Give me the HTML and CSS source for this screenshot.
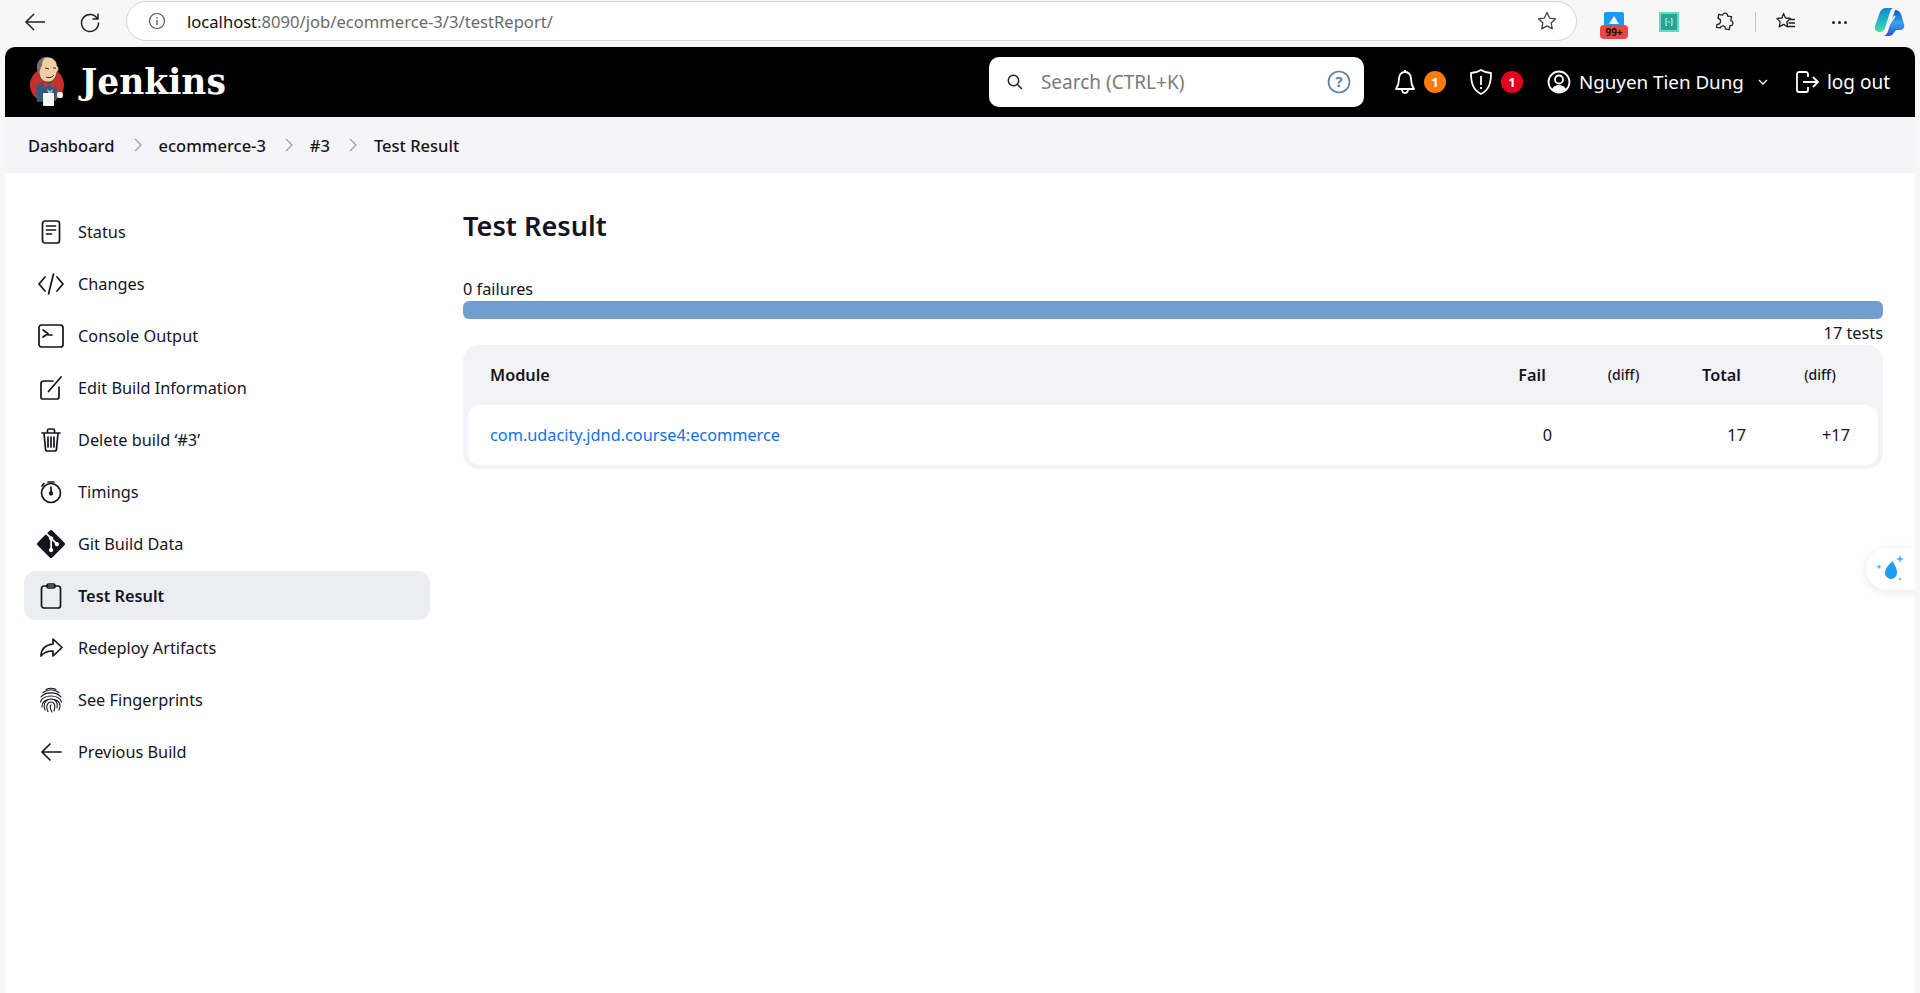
FILE: index.html
```html
<!DOCTYPE html>
<html lang="en">
<head>
<meta charset="utf-8">
<title>Test Result</title>
<link rel="stylesheet" href="styles.css">
</head>
<body>
<div class="toolbar">
  <svg class="tb-back" width="24" height="24" viewBox="0 0 24 24"><path d="M22 12H3M11 4l-8 8 8 8" fill="none" stroke="#222" stroke-width="1.5"/></svg>
  <svg class="tb-reload" width="24" height="24" viewBox="0 0 24 24"><path d="M19.5 9A8.5 8.5 0 1 0 20.5 12.5M20 3.500V9h-5.500" fill="none" stroke="#222" stroke-width="1.5"/></svg>
  <div class="urlbar">
    <svg class="url-info" width="20" height="20" viewBox="0 0 20 20"><circle cx="10" cy="10" r="7.500" fill="none" stroke="#555" stroke-width="1.200"/><path d="M10 9v5M10 6v1.500" stroke="#555" stroke-width="1.300"/></svg>
    <span class="url-text"><span class="url-host">localhost</span>:8090/job/ecommerce-3/3/testReport/</span>
    <svg class="url-star" width="22" height="22" viewBox="0 0 22 22"><path d="M11 2.500l2.600 5.600 6 .7-4.500 4.100 1.200 6L11 15.900l-5.300 3 1.200-6-4.500-4.100 6-.7z" fill="none" stroke="#444" stroke-width="1.300" stroke-linejoin="round"/></svg>
  </div>
  <div class="ext ext-app">
    <svg width="20" height="20" viewBox="0 0 20 20"><rect width="20" height="18" rx="2" fill="#1a9bf0"/><path d="M10 4l5 8H5z" fill="#fff"/></svg>
    <span class="ext-badge">99+</span>
  </div>
  <svg class="ext ext-green" width="20" height="20" viewBox="0 0 20 20"><rect width="20" height="20" fill="#62dcc6"/><rect x="2" y="2" width="16" height="16" fill="#2aa592"/><path d="M8 6.500H7v7h1M12 6.500h1v7h-1M9 10h2" fill="none" stroke="#d8f5ef" stroke-width="1"/></svg>
  <svg class="ext ext-puzzle" width="20" height="20" viewBox="0 0 20 20"><path d="M7.500 3.500a2.500 2.500 0 0 1 5 0h4v4a2.500 2.500 0 0 1 0 5v4h-4a2.500 2.500 0 0 0-5 0h-4v-3a2.500 2.500 0 0 0 0-6v-4z" transform="rotate(10 10 10)" fill="none" stroke="#222" stroke-width="1.300" stroke-linejoin="round"/></svg>
  <span class="tb-sep"></span>
  <svg class="ext ext-fav" width="22" height="22" viewBox="0 0 22 22"><path d="M8.500 2.500l2 4.500 5 .5-3.700 3.400 1 5-4.300-2.500-4.300 2.500 1-5L2 7.500l5-.5zM14 8.500h6M13.500 12h6.500M13 15.500h7" fill="none" stroke="#222" stroke-width="1.300" stroke-linejoin="round"/></svg>
  <span class="ext-dots"><i></i><i></i><i></i></span>
  <svg class="ext ext-copilot" width="30" height="28" viewBox="0 0 30 28">
    <defs>
      <linearGradient id="cpa" x1="0" y1="0" x2="0" y2="1"><stop offset="0" stop-color="#1583d8"/><stop offset=".55" stop-color="#22b8c8"/><stop offset="1" stop-color="#4fd89a"/></linearGradient>
      <linearGradient id="cpb" x1="0" y1="0" x2="0" y2="1"><stop offset="0" stop-color="#0f5fb8"/><stop offset=".5" stop-color="#3aa0f0"/><stop offset="1" stop-color="#2a50d0"/></linearGradient>
    </defs>
    <path d="M20 2c3 0 5 2 6 4l3 10c1 3-1 6-4 6h-4l-3 4c-1 1-2 2-4 2H9c2-1 3-2 4-5z" fill="url(#cpb)"/>
    <path d="M11 0h8c-2 0-3 1-4 4L10 20c-1 3-3 4-5 4H4c-3 0-5-3-4-6L5 4c1-2 3-4 6-4z" fill="url(#cpa)"/>
    <path d="M20 8l-8 11" stroke="#f7f7f7" stroke-width="1.600"/>
  </svg>
</div>

<div class="page">
  <header class="head">
    <a class="brand" href="#">
      <svg class="brand-logo" width="36" height="50" viewBox="0 0 36 50">
        <circle cx="18" cy="28" r="17" fill="#c9302c"/>
        <path d="M7 30c2-3 5-5 9-5h6c4 1 6 4 6 8l-1 11-19 1z" fill="#2f5c7d"/>
        <path d="M9 8c0-5 4-8 9-8 6 0 10 4 10 9 2 1 2 4 0 6-1 6-4 10-9 10-5 0-8-3-9-9-1-2-1-5-1-8z" fill="#f0cfa8" stroke="#3a2a20" stroke-width=".6"/>
        <path d="M10 17C7 12 7 6 11 3c2-2 4-2 6-3-3 2-4 5-4 9l-1 1z" fill="#77706a"/>
        <path d="M17 20c2 1 6 1 8-2M16 11l4 1M24 11l3 0" fill="none" stroke="#3a2a20" stroke-width="1"/>
        <path d="M15 25l5 2 6-3v7l-6-3-5 3z" fill="#d8322e"/>
        <path d="M18 32l3 2 3-2-1 4h-4z" fill="#9fb6c4"/>
        <rect x="14" y="36" width="11" height="13" rx="1" fill="#f6f6f6"/>
        <rect x="28" y="35" width="6" height="6" rx="2" fill="#eee"/>
      </svg>
      <span class="brand-name">Jenkins</span>
    </a>
    <div class="search">
      <svg width="18" height="18" viewBox="0 0 18 18"><circle cx="7.500" cy="7.500" r="5.200" fill="none" stroke="#222" stroke-width="1.500"/><path d="M11.500 11.500L16 16" stroke="#222" stroke-width="1.500"/></svg>
      <span class="search-text">Search (CTRL+K)</span>
      <svg class="search-help" width="24" height="24" viewBox="0 0 24 24"><circle cx="12" cy="12" r="10.500" fill="none" stroke="#5e7fab" stroke-width="1.700"/><text x="12" y="17" class="help-mark">?</text></svg>
    </div>
    <div class="head-actions">
      <span class="act">
        <svg width="24" height="26" viewBox="0 0 24 26"><path d="M12 3c-4 0-6 3-6 7 0 5-1 7-3 10h18c-2-3-3-5-3-10 0-4-2-7-6-7zM9 20c0 3 1.500 4 3 4s3-1 3-4M12 1v2" fill="none" stroke="#fff" stroke-width="1.800" stroke-linejoin="round"/></svg>
        <span class="badge badge-orange">1</span>
      </span>
      <span class="act">
        <svg width="26" height="28" viewBox="0 0 26 28"><path d="M13 2c3 2 6 3 10 3 0 10-2 17-10 21C5 22 3 15 3 5c4 0 7-1 10-3z" fill="none" stroke="#fff" stroke-width="1.800" stroke-linejoin="round"/><path d="M13 8v9M13 19v2" stroke="#fff" stroke-width="1.800"/></svg>
        <span class="badge badge-red">1</span>
      </span>
      <span class="user">
        <svg width="24" height="24" viewBox="0 0 24 24"><circle cx="12" cy="12" r="10.500" fill="none" stroke="#fff" stroke-width="1.800"/><circle cx="12" cy="9.500" r="4" fill="none" stroke="#fff" stroke-width="1.800"/><path d="M5 19c2-3 4-4 7-4s5 1 7 4c-2 2-4 3-7 3s-5-1-7-3z" fill="#fff"/></svg>
        <span class="user-name">Nguyen Tien Dung</span>
        <svg class="user-caret" width="12" height="12" viewBox="0 0 12 12"><path d="M2 4l4 4 4-4" fill="none" stroke="#fff" stroke-width="1.400"/></svg>
      </span>
      <span class="logout">
        <svg width="26" height="26" viewBox="0 0 26 26"><path d="M14 8V5c0-1-1-2-2-2H5C4 3 3 4 3 5v16c0 1 1 2 2 2h7c1 0 2-1 2-2v-3M9 13h15M19 8l5 5-5 5" fill="none" stroke="#fff" stroke-width="1.800"/></svg>
        <span>log out</span>
      </span>
    </div>
  </header>

  <nav class="crumbs">
    <a href="#">Dashboard</a><svg class="sep" width="10" height="14" viewBox="0 0 10 14"><path d="M2 1l6 6-6 6" fill="none" stroke="#8ea3c3" stroke-width="1.300"/></svg>
    <a href="#">ecommerce-3</a><svg class="sep" width="10" height="14" viewBox="0 0 10 14"><path d="M2 1l6 6-6 6" fill="none" stroke="#8ea3c3" stroke-width="1.300"/></svg>
    <a href="#">#3</a><svg class="sep" width="10" height="14" viewBox="0 0 10 14"><path d="M2 1l6 6-6 6" fill="none" stroke="#8ea3c3" stroke-width="1.300"/></svg>
    <a href="#">Test Result</a>
  </nav>

  <div class="layout">
    <aside class="side">
      <a class="item" href="#"><svg width="24" height="24" viewBox="0 0 24 24"><rect x="3.500" y="1" width="17" height="22" rx="2.500" class="ic"/><path d="M7.500 6h9M7.500 10h9M7.500 14h5" class="ic"/></svg>Status</a>
      <a class="item" href="#"><svg width="26" height="24" viewBox="0 0 26 24"><path d="M7 5l-6 7 6 7M19 5l6 7-6 7M15.500 2l-5 20" class="ic"/></svg>Changes</a>
      <a class="item" href="#"><svg width="26" height="24" viewBox="0 0 26 24"><rect x="1" y="1" width="24" height="22" rx="2.500" class="ic"/><path d="M5 6l5 3.500-5 3.500M10 11h4" class="ic"/></svg>Console Output</a>
      <a class="item" href="#"><svg width="24" height="24" viewBox="0 0 24 24"><path d="M14 5H4.500C3 5 2 6 2 7.500v14C2 22.500 3 23 4 23h14c1.500 0 2-1 2-2.500V11M9.500 15.500L22 1" class="ic"/></svg>Edit Build Information</a>
      <a class="item" href="#"><svg width="24" height="24" viewBox="0 0 24 24"><path d="M3 5h18M5 5l1.500 16c0 1 1 2 2 2h7c1 0 2-1 2-2L19 5M8.500 5V2.500c0-.8.500-1.500 1.500-1.500h4c1 0 1.500.7 1.500 1.500V5M9 9v10M12 9v10M15 9v10" class="ic"/></svg>Delete build ‘#3’</a>
      <a class="item" href="#"><svg width="24" height="24" viewBox="0 0 24 24"><circle cx="12" cy="13" r="9.500" class="ic"/><path d="M12 7v6M9 2h6M5 3.500L3 6" class="ic"/><circle cx="12" cy="13.500" r="1.300" class="ic"/></svg>Timings</a>
      <a class="item" href="#"><svg width="28" height="28" viewBox="0 0 24 24"><path d="M23.546 10.930L13.067.452c-.604-.603-1.582-.603-2.188 0L8.708 2.627l2.760 2.760c.645-.215 1.379-.070 1.889.441.516.515.658 1.258.438 1.900l2.658 2.660c.645-.223 1.387-.078 1.900.435.721.720.721 1.884 0 2.604-.719.719-1.881.719-2.600 0-.539-.541-.674-1.337-.404-1.996L12.860 8.955v6.525c.176.086.342.203.488.348.713.721.713 1.883 0 2.600-.719.721-1.889.721-2.609 0-.719-.719-.719-1.879 0-2.598.182-.180.387-.316.605-.406V8.835c-.217-.091-.424-.222-.600-.401-.545-.545-.676-1.342-.396-2.009L7.636 3.700.450 10.881c-.600.605-.600 1.584 0 2.189l10.480 10.477c.604.604 1.582.604 2.186 0l10.430-10.430c.605-.603.605-1.582 0-2.187" fill="#14141f"/></svg>Git Build Data</a>
      <a class="item item-on" href="#"><svg width="24" height="26" viewBox="0 0 24 26"><rect x="2.500" y="3" width="19" height="22" rx="2.500" class="ic"/><rect x="8" y="1" width="8" height="4" rx="1.500" class="ic"/></svg>Test Result</a>
      <a class="item" href="#"><svg width="24" height="24" viewBox="0 0 24 24"><path d="M14 3l9 8.500-9 8.500v-5c-5 0-9 1-12 5 0-7 4-11 12-12z" class="ic"/></svg>Redeploy Artifacts</a>
      <a class="item" href="#"><svg width="24" height="26" viewBox="0 0 24 26"><path d="M7 2.500c3-1.500 7-1.500 10 0M4 5.500c5-3.500 11-3.500 16 0M2 10c4-5.500 16-5.500 20 0M1.500 15c2-8 19-8 21 0M3 20c-1-10 18-11 18-1 0 2-1 3-1 4M6 23c-3-8 3-11 6-11 5 0 7 4 6 9M9 24.500C6 19 9 15 12 15c3 0 5 3 3 9M12 18c-2 2 0 5 1 7" class="ic ic-thin"/></svg>See Fingerprints</a>
      <a class="item" href="#"><svg width="24" height="24" viewBox="0 0 24 24"><path d="M22 12H3M11 4l-8 8 8 8" class="ic"/></svg>Previous Build</a>
    </aside>

    <main class="main">
      <h1 class="title">Test Result</h1>
      <div class="fail-label">0 failures</div>
      <div class="bar"></div>
      <div class="count">17 tests</div>
      <div class="table-wrap">
        <table class="results">
          <colgroup><col><col class="c-fail"><col class="c-diff"><col class="c-total"><col class="c-diff2"></colgroup>
          <thead>
            <tr><th class="th-left">Module</th><th>Fail</th><th class="th-small">(diff)</th><th>Total</th><th class="th-small">(diff)</th></tr>
          </thead>
          <tbody>
            <tr><td><a href="#">com.udacity.jdnd.course4:ecommerce</a></td><td class="num">0</td><td class="num"></td><td class="num">17</td><td class="num">+17</td></tr>
          </tbody>
        </table>
      </div>
    </main>
  </div>

  <div class="float-drop">
    <svg width="30" height="28" viewBox="0 0 30 28"><path d="M15 6c3 4 6 8 6 12a6 6 0 0 1-12 0c0-4 3-8 6-12z" fill="#1f9bf0" transform="rotate(8 15 18)"/><path d="M24 0l1 3 3 1-3 1-1 3-1-3-3-1 3-1zM3 9l.7 2 2 .7-2 .7-.7 2-.7-2-2-.7 2-.7zM24 22l.5 1.500 1.500.5-1.500.5-.5 1.500-.5-1.500-1.500-.5 1.500-.5z" fill="#3fb0f5"/></svg>
  </div>
</div>
</body>
</html>
```

FILE: styles.css
```css
* { box-sizing: border-box; }
html, body { margin: 0; height: 100%; }
body {
  background: #f7f7f7;
  font-family: "Noto Sans", sans-serif;
  font-size: 16.300px;
  color: #14141f;
  display: flex;
  flex-direction: column;
  overflow: hidden;
}
a { color: inherit; text-decoration: none; }

.toolbar { height: 47px; flex: none; display: flex; align-items: center; position: relative; }
.tb-back { margin-left: 23px; margin-top: -3px; }
.tb-reload { margin-left: 31px; margin-top: -3px; }
.urlbar {
  margin-left: 24px; width: 1451px; height: 40px; margin-top: -5px;
  background: #fff; border: 1px solid #d4d4d4; border-radius: 20px;
  display: flex; align-items: center; padding: 0 13px 0 20px;
}
.url-text { margin-left: 20px; font-size: 16.600px; color: #6a6a6a; flex: 1; }
.url-host { color: #111; }
.url-star { margin-right: 5px; }
.ext { flex: none; margin-top: -3px; }
.ext-app { position: relative; width: 20px; height: 20px; margin-left: 27px; }
.ext-app svg { display: block; }
.ext-badge {
  position: absolute; left: -4px; top: 13px; width: 28px; height: 14px; border-radius: 4px;
  background: #ef4444; color: #111; font-size: 10px; font-weight: 700; line-height: 14px; text-align: center;
}
.ext-green { margin-left: 35px; }
.ext-puzzle { margin-left: 35px; }
.tb-sep { width: 1px; height: 20px; background: #c8c8c8; margin-left: 21px; margin-top: -3px; }
.ext-fav { margin-left: 19px; }
.ext-dots { display: flex; gap: 3px; margin-left: 35px; margin-top: -3px; }
.ext-dots i { width: 3px; height: 3px; border-radius: 50%; background: #222; }
.ext-copilot { margin-left: 28px; }

.page {
  flex: 1; margin: 0 5px 0 5px; background: #fff; position: relative;
  border-radius: 10px 10px 0 0; overflow: hidden;
}

.head {
  height: 70px; background: #000; color: #fff; display: flex; align-items: center; padding-left: 24px;
}
.brand { display: flex; align-items: center; gap: 16px; }
.brand-logo { display: block; }
.brand-name {
  font-family: "DejaVu Serif", serif; font-weight: 700; font-size: 34.500px; line-height: 40px; color: #fff;
}
.search {
  margin-left: auto; width: 375px; height: 50px; background: #fff; border-radius: 10px;
  display: flex; align-items: center; padding: 0 13px 0 17px; color: #7a7a7a;
}
.search-text { flex: 1; margin-left: 17px; font-size: 19px; }
.help-mark { font-size: 15px; font-weight: 700; fill: #5e7fab; text-anchor: middle; }
.head-actions { display: flex; align-items: center; margin-right: 25px; margin-left: 29px; font-size: 19px; }
.act { display: flex; align-items: center; gap: 7px; margin-right: 22px; }
.act svg, .user svg, .logout svg { display: block; }
.badge {
  width: 22px; height: 22px; border-radius: 50%; color: #fff; font-size: 13px; font-weight: 700;
  display: flex; align-items: center; justify-content: center;
}
.badge-orange { background: #fb7c0c; }
.badge-red { background: #e6001f; }
.user { display: flex; align-items: center; gap: 8px; margin-left: 2px; }
.user-name { font-size: 18.800px; }
.user-caret { margin-left: 5px; }
.logout { display: flex; align-items: center; gap: 7px; margin-left: 25px; }

.crumbs {
  height: 56px; background: #f5f5f7; display: flex; align-items: center; padding-left: 23px;
  font-size: 16.500px; font-weight: 500;
}
.sep { margin: 0 16px 0 18px; }

.layout { display: flex; }
.side { width: 425px; padding: 34px 0 0 19px; display: flex; flex-direction: column; gap: 3px; flex: none; }
.item {
  height: 49px; width: 406px; border-radius: 12px; display: flex; align-items: center; position: relative;
  padding-left: 54px;
}
.item svg { position: absolute; left: 27px; top: 50%; transform: translate(-50%, -50%); }
.item-on { background: #ecedf3; font-weight: 600; }
.ic { fill: none; stroke: #14141f; stroke-width: 1.700; stroke-linecap: round; stroke-linejoin: round; }
.ic-thin { stroke-width: 1.100; }

.main { flex: 1; padding: 34px 32px 0 33px; }
.title { margin: 0; font-size: 27.200px; line-height: 38px; font-weight: 600; }
.fail-label { margin-top: 32px; line-height: 24px; }
.bar { height: 18px; background: #729ecf; border-radius: 6px; }
.count { margin-top: 2px; line-height: 24px; text-align: right; }

.table-wrap { background: #f2f2f7; border-radius: 16px; padding: 0 5px 4px; }
.results { width: 100%; border-collapse: separate; border-spacing: 0; table-layout: fixed; }
.c-fail { width: 84px; }
.c-diff { width: 101px; }
.c-total { width: 93px; }
.c-diff2 { width: 110px; }
.results th { height: 60px; padding: 0 22px; font-weight: 600; text-align: center; }
.results .th-left { text-align: left; }
.results .th-small { font-size: 14px; font-weight: 500; padding-bottom: 2px; padding-right: 24px; }
.results .th-small:last-child { padding-right: 28px; }
.results td { height: 60px; padding: 0 22px; background: #fff; }
.results td:first-child { border-radius: 12px 0 0 12px; }
.results td:last-child { border-radius: 0 12px 12px 0; padding-right: 28px; }
.results td a { color: #1071e5; }
.num { text-align: right; }

.float-drop {
  position: absolute; right: 0; top: 501px; width: 49px; height: 42px; background: #fff;
  border-radius: 21px 0 0 21px; box-shadow: 0 2px 10px rgba(0,0,0,.1);
  display: flex; align-items: center; justify-content: center;
}
```
